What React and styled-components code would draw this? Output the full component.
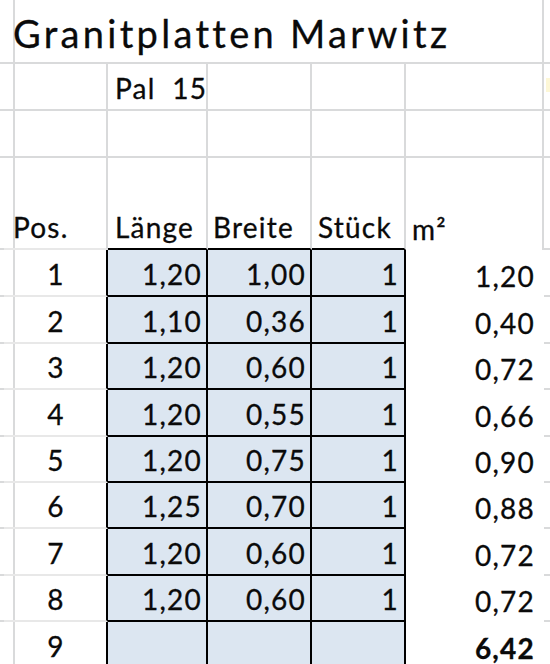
import React from 'react';
import styled, { createGlobalStyle } from 'styled-components';

const GRID = '#d9dadb';
const FAINT = '#e8e8e8';
const INK = '#000';
const FILL = '#dce6f1';

const GlobalStyle = createGlobalStyle`
  html, body {
    margin: 0;
    padding: 0;
    background: #fff;
    overflow: hidden;
  }
  body {
    font-family: Lato, "Open Sans", sans-serif;
    color: #0a0a0a;
  }
`;

const Sheet = styled.div`
  width: 550px;
  height: 664px;
  overflow: hidden;
  display: flex;
  flex-direction: column;
`;

const Row = styled.div`
  display: grid;
  grid-template-columns: 4px 104px 100px 104px 94px 138px 1fr;
  height: ${({ $h }) => $h}px;
  flex: none;
`;

const Cell = styled.div`
  box-sizing: border-box;
  display: flex;
  align-items: flex-end;
  justify-content: ${({ $align }) =>
    $align === 'right' ? 'flex-end' : $align === 'center' ? 'center' : 'flex-start'};
  padding: 0 ${({ $pr }) => $pr ?? 6}px 7px ${({ $pl }) => $pl ?? 7}px;
  font-size: 28px;
  line-height: 1;
  letter-spacing: 1.2px;
  -webkit-text-stroke: 0.3px currentColor;
  font-weight: ${({ $bold }) => ($bold ? 700 : 400)};
  white-space: nowrap;
  background: ${({ $fill }) => ($fill ? FILL : 'transparent')};
  border-right: ${({ $r }) => ($r ? `2px solid ${$r}` : 'none')};
  border-bottom: ${({ $b }) => ($b ? `2px solid ${$b}` : 'none')};
  ${({ $span }) => $span && `grid-column: span ${$span};`}
`;

const Title = styled(Cell)`
  font-size: 38px;
  letter-spacing: 3.3px;
  padding-left: 9px;
  padding-bottom: 10px;
`;

const Note = styled.div`
  width: 4px;
  height: 14px;
  margin: 0 0 10px 2px;
  background: #fdf7d6;
`;

const dataRows = [
  { pos: 1, l: '1,20', b: '1,00', n: '1', m: '1,20', h: 47 },
  { pos: 2, l: '1,10', b: '0,36', n: '1', m: '0,40', h: 47 },
  { pos: 3, l: '1,20', b: '0,60', n: '1', m: '0,72', h: 46 },
  { pos: 4, l: '1,20', b: '0,55', n: '1', m: '0,66', h: 47 },
  { pos: 5, l: '1,20', b: '0,75', n: '1', m: '0,90', h: 46 },
  { pos: 6, l: '1,25', b: '0,70', n: '1', m: '0,88', h: 46 },
  { pos: 7, l: '1,20', b: '0,60', n: '1', m: '0,72', h: 47 },
  { pos: 8, l: '1,20', b: '0,60', n: '1', m: '0,72', h: 46 },
  { pos: 9, l: '', b: '', n: '', m: '6,42', h: 47, total: true },
];

export default function App() {
  return (
    <>
      <GlobalStyle />
      <Sheet>
        <Row $h={64}>
          <Cell $r={GRID} $b={GRID} />
          <Title $span={5} $r={GRID} $b={GRID}>Granitplatten Marwitz</Title>
          <Cell $b={GRID} />
        </Row>

        <Row $h={47}>
          <Cell $r={GRID} $b={GRID} />
          <Cell $r={GRID} $b={GRID} />
          <Cell $r={GRID} $b={GRID}>Pal&nbsp; 15</Cell>
          <Cell $r={GRID} $b={GRID} />
          <Cell $r={GRID} $b={GRID} />
          <Cell $r={GRID} $b={GRID} />
          <Cell $b={GRID} $pl={0}><Note /></Cell>
        </Row>

        <Row $h={47}>
          <Cell $r={GRID} $b={GRID} />
          <Cell $r={GRID} $b={GRID} />
          <Cell $r={GRID} $b={GRID} />
          <Cell $r={GRID} $b={GRID} />
          <Cell $r={GRID} $b={GRID} />
          <Cell $r={GRID} $b={GRID} />
          <Cell $b={GRID} />
        </Row>

        <Row $h={92}>
          <Cell $r={GRID} $b={GRID} />
          <Cell $r={GRID} $b={FAINT} $pl={9}>Pos.</Cell>
          <Cell $r={GRID} $b={INK}>Länge</Cell>
          <Cell $r={GRID} $b={INK} $pl={5}>Breite</Cell>
          <Cell $r={GRID} $b={INK} $pl={6}>Stück</Cell>
          <Cell $r={GRID} $pl={6}>m²</Cell>
          <Cell $b={GRID} />
        </Row>

        {dataRows.map((d) => (
          <Row key={d.pos} $h={d.h}>
            <Cell $r={GRID} $b={GRID} />
            <Cell $r={INK} $b={FAINT} $align="center" $pl={2} $pr={0}>{d.pos}</Cell>
            <Cell $fill $r={INK} $b={INK} $align="right" $pr={4}>{d.l}</Cell>
            <Cell $fill $r={INK} $b={INK} $align="right" $pr={4}>{d.b}</Cell>
            <Cell $fill $r={INK} $b={INK} $align="right" $pr={5}>{d.n}</Cell>
            <Cell $align="right" $pr={9} $bold={d.total}>{d.m}</Cell>
            <Cell $b={d.total ? null : GRID} />
          </Row>
        ))}
      </Sheet>
    </>
  );
}
